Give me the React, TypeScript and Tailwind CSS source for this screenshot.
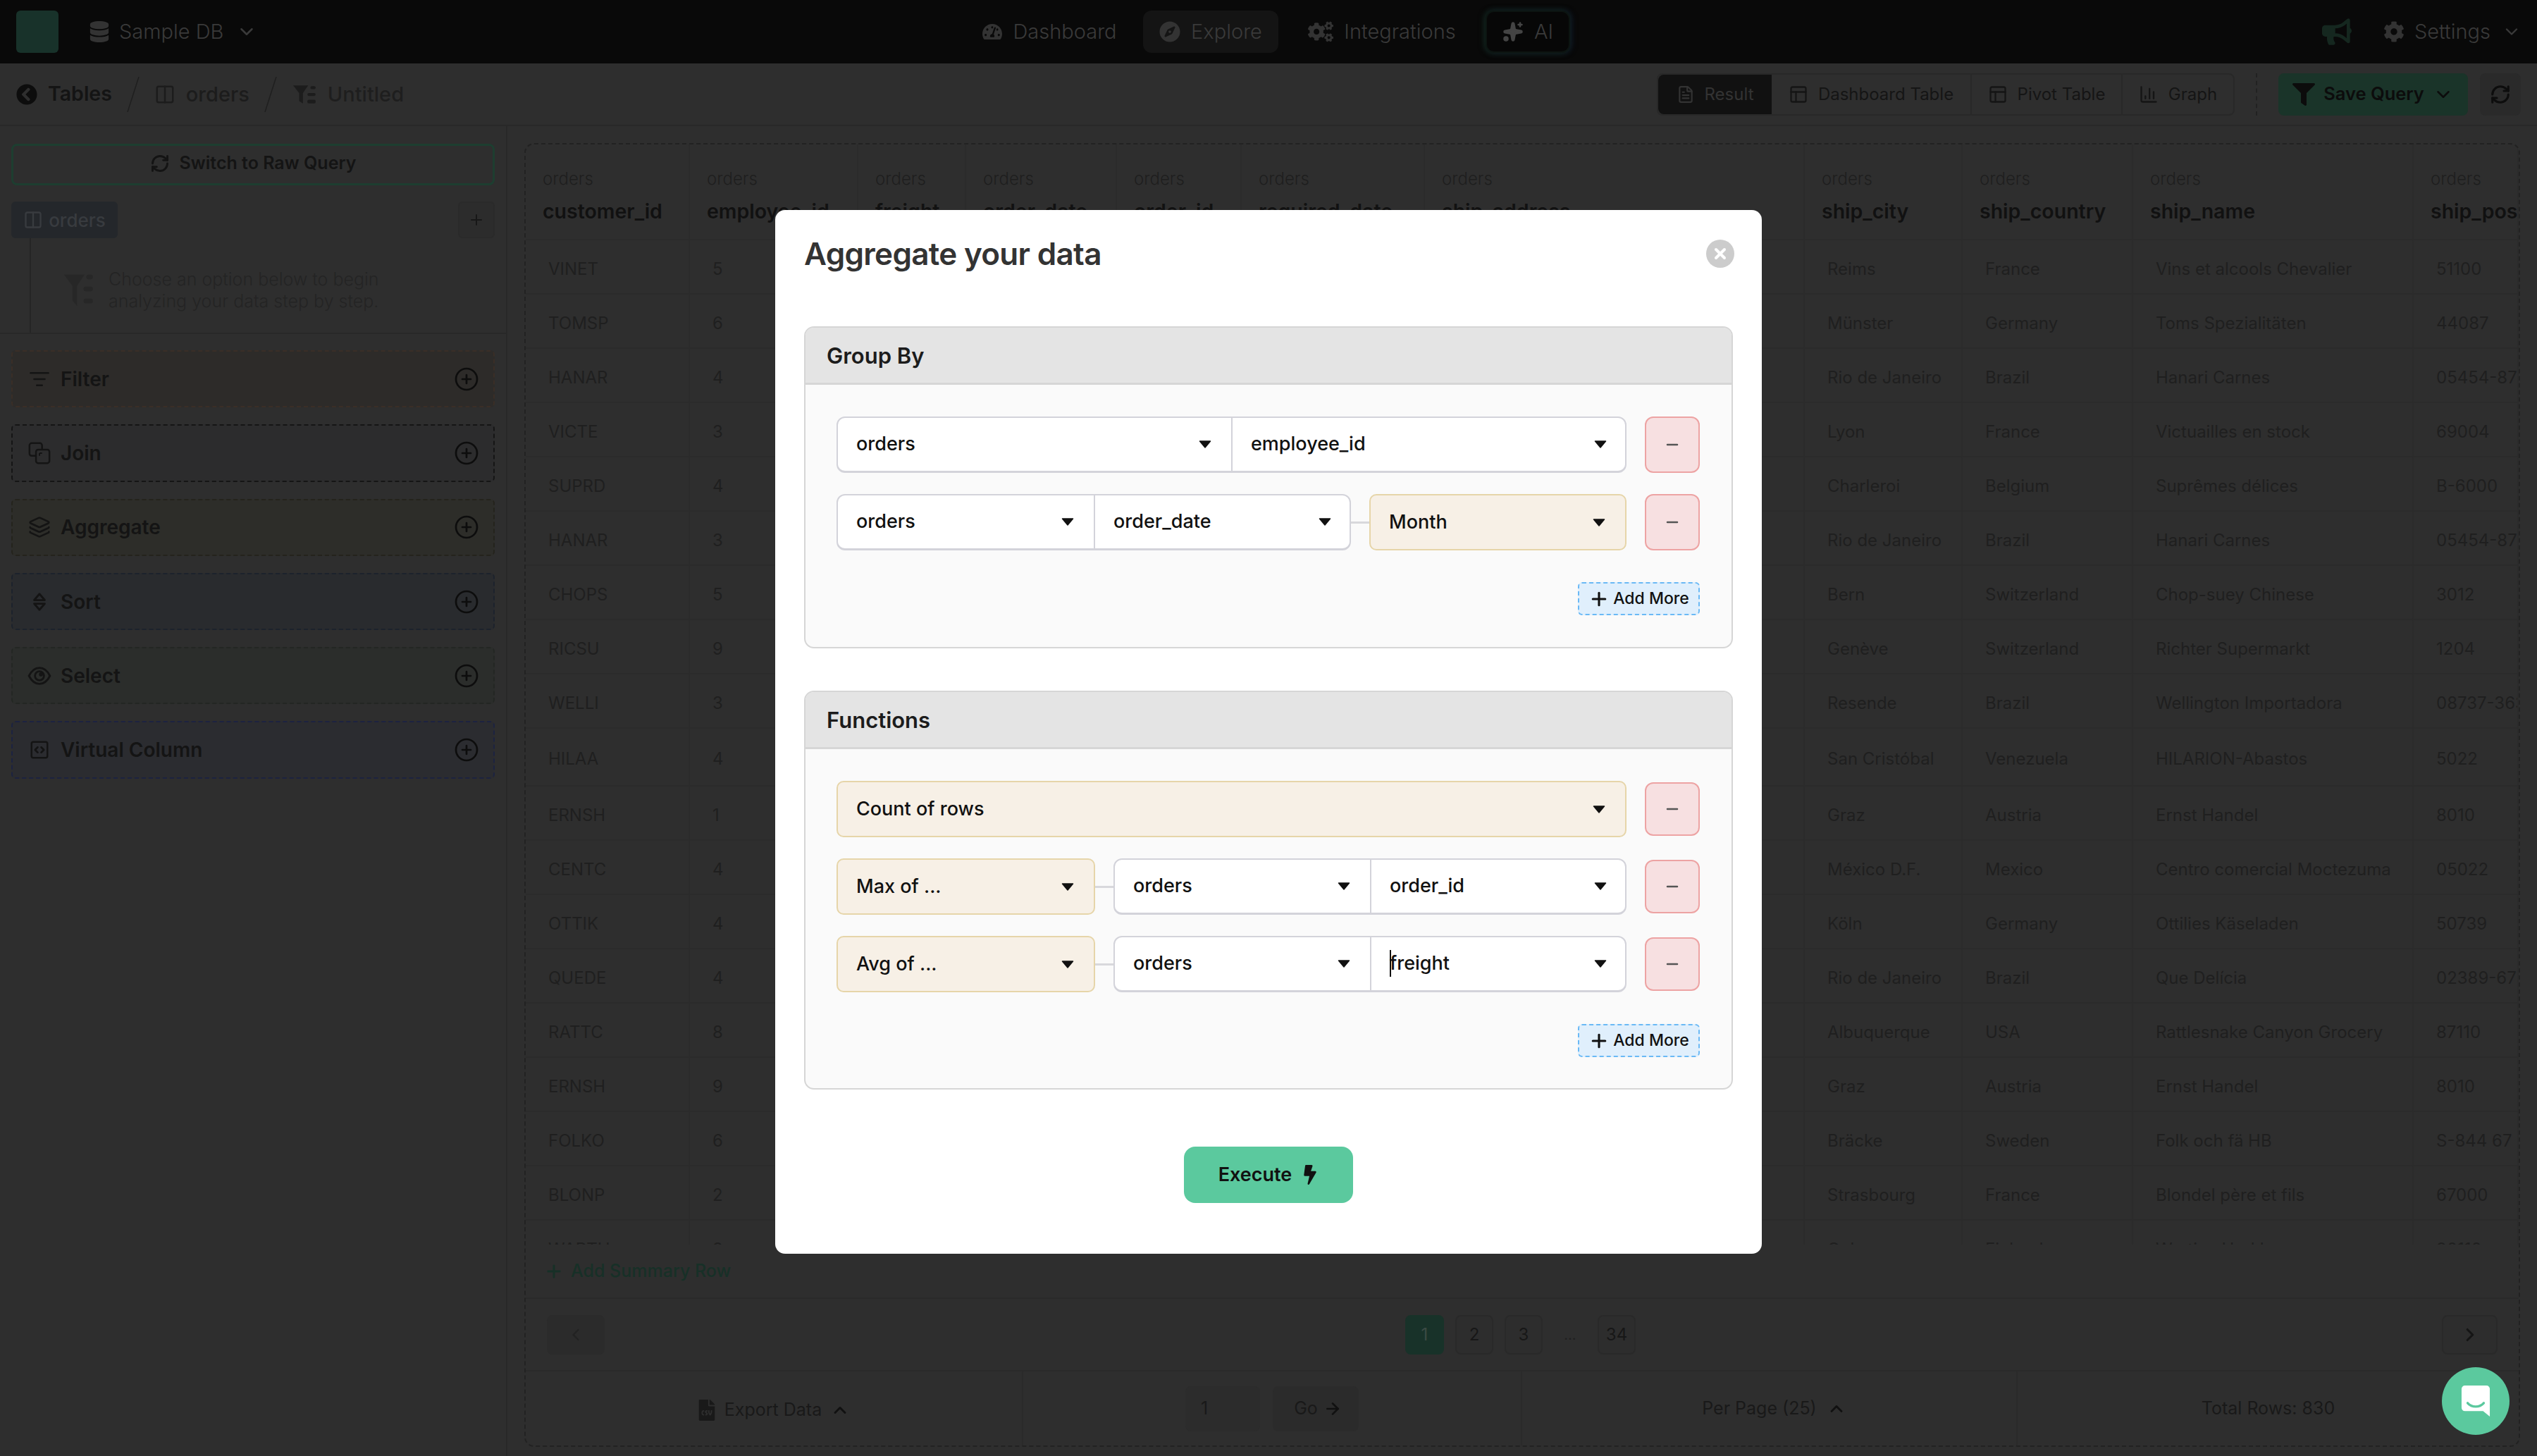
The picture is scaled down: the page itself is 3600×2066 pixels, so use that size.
import React from "react";
import { FaTachometerAlt, FaCompass, FaCogs, FaCog, FaBullhorn, FaFilter, FaChevronCircleLeft, FaDatabase, FaBolt, FaFileCsv } from "react-icons/fa";
import { ChevronDown, ChevronUp, ChevronLeft, ChevronRight, Sparkles, Columns2, RefreshCw, Plus, Minus, CirclePlus, ListFilter, Layers, SquareCode, PanelsTopLeft, ChartColumn, X, FileText, ArrowRight } from "lucide-react";

const rows: string[][] = [
  ["VINET","5","Reims","France","Vins et alcools Chevalier","51100"],
  ["TOMSP","6","Münster","Germany","Toms Spezialitäten","44087"],
  ["HANAR","4","Rio de Janeiro","Brazil","Hanari Carnes","05454-876"],
  ["VICTE","3","Lyon","France","Victuailles en stock","69004"],
  ["SUPRD","4","Charleroi","Belgium","Suprêmes délices","B-6000"],
  ["HANAR","3","Rio de Janeiro","Brazil","Hanari Carnes","05454-876"],
  ["CHOPS","5","Bern","Switzerland","Chop-suey Chinese","3012"],
  ["RICSU","9","Genève","Switzerland","Richter Supermarkt","1204"],
  ["WELLI","3","Resende","Brazil","Wellington Importadora","08737-363"],
  ["HILAA","4","San Cristóbal","Venezuela","HILARION-Abastos","5022"],
  ["ERNSH","1","Graz","Austria","Ernst Handel","8010"],
  ["CENTC","4","México D.F.","Mexico","Centro comercial Moctezuma","05022"],
  ["OTTIK","4","Köln","Germany","Ottilies Käseladen","50739"],
  ["QUEDE","4","Rio de Janeiro","Brazil","Que Delícia","02389-673"],
  ["RATTC","8","Albuquerque","USA","Rattlesnake Canyon Grocery","87110"],
  ["ERNSH","9","Graz","Austria","Ernst Handel","8010"],
  ["FOLKO","6","Bräcke","Sweden","Folk och fä HB","S-844 67"],
  ["BLONP","2","Strasbourg","France","Blondel père et fils","67000"],
  ["WARTH","3","Oulu","Finland","Wartian Herkku","90110"],
];

const columns: [string, string][] = [
  ["customer_id","w-[233px]"],["employee_id","w-[239px]"],["freight","w-[153px]"],["order_date","w-[214px]"],
  ["order_id","w-[177px]"],["required_date","w-[260px]"],["ship_address","w-[539px]"],["ship_city","w-[224px]"],
  ["ship_country","w-[242px]"],["ship_name","w-[398px]"],["ship_postal_code","w-[149px]"],
];

const Caret = () => (
  <svg viewBox="0 0 18 11" className="w-[18px] h-[11px] shrink-0 ml-auto"><path d="M1.5 1 H16.5 L9 10 Z" fill="#111" stroke="#111" strokeWidth="1.5" strokeLinejoin="round" /></svg>
);

function Sel({ label, w, tint }: { label: string; w: string; tint?: boolean }) {
  return (
    <div className={`${w} h-full flex items-center pl-[26px] pr-[28px] text-[27px] font-medium text-[#111] ${tint ? "bg-[#f7f0e6] border-2 border-[#e6d5a9] rounded-[10px]" : ""}`}>
      <span className="whitespace-nowrap">{label}</span>
      <Caret />
    </div>
  );
}

const Connector = () => <div className="w-[26px] h-[3px] bg-[#d8d8dc] shrink-0" />;

function Combo({ w, a, b, split, caretMark }: { w: string; a: string; b: string; split: string; caretMark?: boolean }) {
  return (
    <div className={`${w} h-full flex bg-white border-2 border-b-[3px] border-[#d3d3da] rounded-[12px]`}>
      <Sel label={a} w={split} />
      <div className="flex-1 h-full border-l-2 border-[#d3d3da] flex items-center pl-[26px] pr-[26px] text-[27px] font-medium text-[#111] relative">
        {caretMark && <span className="absolute left-[26px] top-[18px] w-[2px] h-[38px] bg-[#111]" />}
        <span className="whitespace-nowrap">{b}</span>
        <Caret />
      </div>
    </div>
  );
}

const MinusBtn = () => (
  <button className="w-[78px] h-full shrink-0 rounded-[12px] bg-[#f7e0e1] border-2 border-[#eda3a3] flex items-center justify-center">
    <Minus className="w-[24px] h-[24px] text-[#555]" strokeWidth={2.5} />
  </button>
);

const AddMore = () => (
  <div className="flex justify-end">
    <button className="w-[173px] h-[47px] rounded-[6px] bg-[#e0effc] border-2 border-dashed border-[#6ab9f5] flex items-center justify-center gap-[5px] text-[23px] font-medium text-[#111]">
      <Plus className="w-[30px] h-[30px]" strokeWidth={2.5} />
      Add More
    </button>
  </div>
);

function Box({ title, children, h }: { title: string; children: React.ReactNode; h: string }) {
  return (
    <section className={`${h} rounded-[14px] border-2 border-[#d6d6d6] bg-[#fafafa] overflow-hidden flex flex-col`}>
      <div className="h-[81px] shrink-0 bg-[#e4e4e4] border-b-[3px] border-[#d6d6d6] flex items-center pl-[30px] pt-[2px] text-[31px] font-semibold text-[#1c1c1c]">{title}</div>
      <div className="flex-1 pl-[44px] pr-[45px] pt-[45px] flex flex-col">{children}</div>
    </section>
  );
}

const SortIcon = () => (
  <svg viewBox="0 0 24 24" className="w-[30px] h-[30px]" fill="none" stroke="#141414" strokeWidth="2.2" strokeLinejoin="round">
    <path d="M12 3 L18 10 H6 Z" /><path d="M12 21 L18 14 H6 Z" />
  </svg>
);
const EyeIcon = () => (
  <svg viewBox="0 0 24 24" className="w-[34px] h-[34px]" fill="none" stroke="#141414" strokeWidth="2">
    <path d="M1.5 12 C5 5 9 4 12 4 C15 4 19 5 22.5 12 C19 19 15 20 12 20 C9 20 5 19 1.5 12 Z" /><circle cx="12" cy="12" r="4.5" /><circle cx="13.5" cy="10.5" r="1" fill="#141414" />
  </svg>
);
const JoinIcon = () => (
  <svg viewBox="0 0 26 26" className="w-[32px] h-[32px]" fill="none" stroke="#141414" strokeWidth="2" strokeLinejoin="round">
    <path d="M16 9 V4 A2.5 2.5 0 0 0 13.5 1.5 H4 A2.5 2.5 0 0 0 1.5 4 V13.5 A2.5 2.5 0 0 0 4 16 H9" />
    <rect x="9" y="9" width="15.5" height="15.5" rx="2.5" />
    <path d="M13 13 H16 M13 13 V16" strokeWidth="1.6" />
  </svg>
);

const cards = [
  { t: "Filter", bg: "bg-[#2d2b29]", b: "border-[#3a2e26]", icon: <ListFilter className="w-[30px] h-[30px]" strokeWidth={2} /> },
  { t: "Join", bg: "bg-[#2c2c2d]", b: "border-[#151515]", icon: <JoinIcon /> },
  { t: "Aggregate", bg: "bg-[#2d2d29]", b: "border-[#24231c]", icon: <Layers className="w-[32px] h-[32px]" strokeWidth={2} /> },
  { t: "Sort", bg: "bg-[#292b2e]", b: "border-[#1c222c]", icon: <SortIcon /> },
  { t: "Select", bg: "bg-[#2b2d2b]", b: "border-[#232623]", icon: <EyeIcon /> },
  { t: "Virtual Column", bg: "bg-[#2b2c30]", b: "border-[#1c2240]", icon: <SquareCode className="w-[30px] h-[30px]" strokeWidth={2} /> },
];

function NavItem({ icon, label, cls }: { icon: React.ReactNode; label: string; cls: string }) {
  return (
    <div className={`h-[60px] flex items-center justify-center gap-[15px] rounded-[12px] text-[29px] font-light text-[#3a3a3a] ${cls}`}>
      {icon}{label}
    </div>
  );
}

const BreadSlash = () => <div className="w-[20px] h-[50px] mx-[20px]"><svg viewBox="0 0 20 50" className="w-full h-full"><path d="M18 0 L2 50" stroke="#1f1f1f" strokeWidth="1.5" /></svg></div>;

const UntitledIcon = () => (
  <svg viewBox="0 0 32 26" className="w-[34px] h-[28px] ml-[2px]"><path d="M0 1 H20 L13 11 V25 L8 22 V11 Z" fill="#1c1c1c" /><rect x="23" y="2" width="7" height="4" rx="2" fill="#1c1c1c" /><rect x="19" y="11" width="11" height="4" rx="2" fill="#1c1c1c" /><rect x="19" y="20" width="11" height="5" rx="2" fill="#1c1c1c" /></svg>
);

function PageBtn({ n, on, w }: { n: string; on?: boolean; w: string }) {
  return <div className={`${w} h-[56px] rounded-[8px] flex items-center justify-center text-[24px] ${on ? "bg-[#183229] text-[#3b4a44]" : "bg-[#2d2d2d] border-2 border-[#292929] text-[#171717]"}`}>{n}</div>;
}

function ToolTab({ icon, label, w, first }: { icon: React.ReactNode; label: string; w: string; first?: boolean }) {
  return (
    <div className={`${w} h-full flex items-center justify-center gap-[14px] text-[24px] ${first ? "bg-[#111111] text-[#333333] rounded-l-[8px]" : "text-[#151515] border-r-2 border-[#282828]"}`}>
      {icon}{label}
    </div>
  );
}

export default function App() {
  return (
    <div className="relative w-[3600px] h-[2066px] overflow-hidden bg-[#2e2e2e] font-['Inter',sans-serif] flex flex-col">
      {/* top bar */}
      <header className="h-[90px] shrink-0 bg-[#090909] flex items-center">
        <div className="w-[760px] flex items-center pl-[23px]">
          <div className="w-[60px] h-[60px] rounded-[6px] bg-[#18322a]" />
          <div className="flex items-center ml-[44px] gap-[14px] text-[29px] font-light text-[#3a3a3a]">
            <FaDatabase className="w-[28px] h-[30px] text-[#333]" />
            Sample DB
            <ChevronDown className="w-[30px] h-[30px] ml-[4px]" />
          </div>
        </div>
        <nav className="flex items-center gap-[16px] ml-[613px]">
          <NavItem label="Dashboard" cls="w-[233px]" icon={<FaTachometerAlt className="w-[28px] h-[28px] text-[#333]" />} />
          <NavItem label="Explore" cls="w-[192px] bg-[#141414]" icon={<FaCompass className="w-[30px] h-[30px] text-[#333]" />} />
          <NavItem label="Integrations" cls="w-[262px]" icon={<FaCogs className="w-[36px] h-[36px] text-[#333]" />} />
          <NavItem label="AI" cls="w-[120px] bg-[#070707] border-2 border-[#0c1411] shadow-[-2px_0_8px_#12261c,2px_0_8px_#101a2c]" icon={<Sparkles className="w-[30px] h-[30px] text-[#444] fill-[#444]" />} />
        </nav>
        <div className="ml-auto flex items-center pr-[22px]">
          <FaBullhorn className="w-[42px] h-[38px] text-[#15271f] mr-[45px]" />
          <FaCog className="w-[30px] h-[30px] text-[#333] mr-[14px]" />
          <span className="text-[29px] font-light text-[#3a3a3a]">Settings</span>
          <ChevronDown className="w-[28px] h-[28px] ml-[16px] text-[#3a3a3a]" />
        </div>
      </header>

      {/* breadcrumb / toolbar */}
      <div className="h-[89px] shrink-0 border-b-2 border-[#282828] flex items-center pl-[23px] pr-[23px]">
        <FaChevronCircleLeft className="w-[30px] h-[30px] text-[#0d0d0d]" />
        <span className="ml-[15px] text-[28.5px] font-semibold text-[#141414]">Tables</span>
        <BreadSlash />
        <Columns2 className="w-[30px] h-[30px] text-[#1c1c1c]" strokeWidth={2} />
        <span className="ml-[15px] text-[29px] font-medium text-[#1c1c1c]">orders</span>
        <BreadSlash />
        <UntitledIcon />
        <span className="ml-[15px] text-[29px] font-medium text-[#1e1e1e]">Untitled</span>
        <div className="ml-auto flex items-center h-[60px]">
          <div className="flex h-full w-[820px] border-2 border-[#282828] rounded-[8px]">
            <ToolTab first w="w-[161px]" label="Result" icon={<FileText className="w-[26px] h-[30px]" />} />
            <ToolTab w="w-[284px]" label="Dashboard Table" icon={<PanelsTopLeft className="w-[28px] h-[30px]" />} />
            <ToolTab w="w-[214px]" label="Pivot Table" icon={<PanelsTopLeft className="w-[28px] h-[30px]" />} />
            <div className="flex-1 h-full flex items-center justify-center gap-[14px] text-[24px] text-[#151515]"><ChartColumn className="w-[28px] h-[30px]" />Graph</div>
          </div>
          <div className="h-full border-l-2 border-dashed border-[#222222] ml-[30px] mr-[30px]" />
          <div className="w-[269px] h-full rounded-[8px] bg-[#1a3429] flex items-center justify-center gap-[12px] text-[25.5px] font-semibold text-[#0c0c0c]">
            <FaFilter className="w-[32px] h-[32px]" />Save Query<ChevronDown className="w-[30px] h-[30px]" />
          </div>
          <div className="w-[58px] h-full ml-[17px] rounded-[8px] bg-[#2a2a2a] flex items-center justify-center">
            <RefreshCw className="w-[30px] h-[30px] text-[#0d0d0d]" strokeWidth={2.5} />
          </div>
        </div>
      </div>

      <div className="flex-1 flex min-h-0">
        {/* sidebar */}
        <aside className="w-[720px] shrink-0 border-r-2 border-[#282828] flex flex-col">
          <div className="h-[295px] shrink-0 border-b-2 border-[#282828] px-[16px] pt-[25px] flex flex-col">
            <button className="w-[686px] h-[59px] pb-[3px] rounded-[8px] border-[3px] border-[#1d3e30] flex items-center justify-center gap-[14px] text-[25px] font-semibold text-[#141414]">
              <RefreshCw className="w-[28px] h-[28px]" strokeWidth={2.5} />Switch to Raw Query
            </button>
            <div className="mt-[23px] h-[52px] flex items-center justify-between">
              <div className="w-[151px] h-full rounded-[6px] bg-[#24272b] flex items-center justify-center gap-[8px] text-[26px] font-medium text-[#383b3f]">
                <Columns2 className="w-[28px] h-[28px]" />orders
              </div>
              <div className="w-[52px] h-full rounded-[6px] bg-[#2c2c2c] border-2 border-[#2a2a2a] flex items-center justify-center">
                <Plus className="w-[24px] h-[24px] text-[#171717]" strokeWidth={2} />
              </div>
            </div>
            <div className="flex-1 ml-[26px] border-l-2 border-[#252525] pl-[46px] pt-[14px] flex items-center gap-[20px]">
              <svg viewBox="0 0 32 38" className="w-[44px] h-[50px] shrink-0"><path d="M0 2 H22 L14 14 V36 L9 30 V14 Z" fill="#272727" /><rect x="24" y="2" width="7" height="5" rx="2.5" fill="#272727" /><rect x="21" y="15" width="10" height="5" rx="2.5" fill="#272727" /><rect x="21" y="28" width="10" height="5" rx="2.5" fill="#272727" /></svg>
              <p className="text-[25px] leading-[31px] font-light text-[#242424] whitespace-nowrap">Choose an option below to begin<br />analyzing your data step by step.</p>
            </div>
          </div>
          <div className="px-[16px] pt-[23px] flex flex-col gap-[24px]">
            {cards.map((c) => (
              <div key={c.t} className={`w-[686px] h-[81.3px] rounded-[6px] border-2 border-dashed ${c.b} ${c.bg} flex items-center pl-[18px] pr-[20px] text-[28px] font-semibold text-[#141414]`}>
                <div className="w-[40px] flex justify-center text-[#141414] mr-[10px]">{c.icon}</div>
                {c.t}
                <CirclePlus className="ml-auto w-[36px] h-[36px] text-[#0d0d0d]" strokeWidth={1.8} />
              </div>
            ))}
          </div>
        </aside>

        {/* table panel */}
        <main className="flex-1 pl-[24px] pr-[24px] pt-[24px] pb-[13px] min-w-0">
          <div className="h-full rounded-[14px] border-2 border-dashed border-[#222222] flex flex-col overflow-hidden">
            <div className="h-[1561px] shrink-0 overflow-hidden">
              <div className="flex h-[136px] border-b-2 border-[#2b2b2b]">
                {columns.map(([name, w]) => (
                  <div key={name} className={`${w} shrink-0 pl-[24px] pt-[35px] border-r-2 border-[#2b2b2b] overflow-hidden`}>
                    <div className="text-[24px] leading-[28px] font-light text-[#1e1e1e]">orders</div>
                    <div className="mt-[14px] text-[28.5px] leading-[36px] font-semibold text-[#111111] whitespace-nowrap">{name}</div>
                  </div>
                ))}
              </div>
              {rows.map((r, i) => (
                <div key={i} className={`flex border-b-2 border-[#2b2b2b] ${i === 9 ? "h-[82px]" : "h-[77px]"}`}>
                  {columns.map(([name, w], c) => {
                    const map: Record<number, number> = { 0: 0, 1: 1, 7: 2, 8: 3, 9: 4, 10: 5 };
                    const v = map[c] !== undefined ? r[map[c]] : "";
                    return (
                      <div key={name} className={`${w} shrink-0 pl-[32px] pt-[6px] border-r-2 border-[#2b2b2b] flex items-center text-[24px] font-normal text-[#1f1f1f] whitespace-nowrap overflow-hidden`}>{v}</div>
                    );
                  })}
                </div>
              ))}
            </div>
            <div className="h-[77px] shrink-0 border-b-2 border-[#2a2a2a] flex items-center pl-[26px] gap-[10px] text-[25px] font-medium text-[#173027]">
              <Plus className="w-[28px] h-[28px]" strokeWidth={2.5} />Add Summary Row
            </div>
            <div className="h-[103px] shrink-0 border-b-2 border-[#2a2a2a] flex items-center px-[30px]">
              <div className="w-[82px] h-[56px] rounded-[8px] bg-[#2b2b2b] flex items-center justify-center"><ChevronLeft className="w-[28px] h-[28px] text-[#222]" /></div>
              <div className="ml-[1136px] flex items-center gap-[16px]">
                <PageBtn n="1" on w="w-[55px]" />
                <PageBtn n="2" w="w-[54px]" />
                <PageBtn n="3" w="w-[54px]" />
                <span className="w-[46px] text-center text-[20px] text-[#1f1f1f]">...</span>
                <PageBtn n="34" w="w-[54px]" />
              </div>
              <div className="ml-auto w-[79px] h-[56px] rounded-[8px] bg-[#2d2d2d] border-2 border-[#292929] flex items-center justify-center"><ChevronRight className="w-[30px] h-[30px] text-[#151515]" strokeWidth={2.5} /></div>
            </div>
            <div className="flex-1 flex text-[25px] text-[#191919]">
              <div className="w-[706px] flex items-center justify-center gap-[12px] border-r-2 border-[#2a2a2a] pt-[4px]">
                <FaFileCsv className="w-[26px] h-[30px]" />Export Data<ChevronUp className="w-[28px] h-[28px] text-[#111]" strokeWidth={2.5} />
              </div>
              <div className="w-[708px] flex items-center justify-center gap-[18px] border-r-2 border-[#2a2a2a]">
                <div className="w-[106px] h-[64px] bg-[#2c2c2c] rounded-[8px] flex items-center pl-[22px]">1</div>
                <div className="w-[122px] h-[64px] bg-[#2b2b2b] rounded-[8px] flex items-center justify-center gap-[8px] pl-[6px]">Go<ArrowRight className="w-[26px] h-[26px] text-[#111]" strokeWidth={2.5} /></div>
              </div>
              <div className="w-[703px] flex items-center justify-center gap-[14px] border-r-2 border-[#2a2a2a] pl-[14px]">
                Per Page (25)<ChevronUp className="w-[28px] h-[28px] text-[#111]" strokeWidth={2.5} />
              </div>
              <div className="flex-1 flex items-center justify-center">Total Rows: 830</div>
            </div>
          </div>
        </main>
      </div>

      {/* modal */}
      <div className="absolute left-[1100px] top-[298px] w-[1400px] h-[1481px] bg-white rounded-[14px] px-[41px] flex flex-col">
        <div className="h-[165px] shrink-0 flex pt-[38px] justify-between">
          <h2 className="text-[44px] leading-[48px] tracking-[-0.7px] font-semibold text-[#333333]">Aggregate your data</h2>
          <button className="w-[40px] h-[40px] mt-[4px] -mr-[2px] rounded-full bg-[#cccccc] flex items-center justify-center">
            <X className="w-[24px] h-[24px] text-white" strokeWidth={4} />
          </button>
        </div>
        <Box title="Group By" h="h-[457px]">
          <div className="h-[80px] flex gap-[26px]">
            <Combo w="w-[1121px]" split="w-[558px]" a="orders" b="employee_id" />
            <MinusBtn />
          </div>
          <div className="h-[80px] mt-[30px] flex gap-[26px] items-center">
            <div className="flex-1 h-full flex items-center">
              <Combo w="w-[730px]" split="w-[363px]" a="orders" b="order_date" />
              <Connector />
              <Sel tint label="Month" w="w-[365px]" />
            </div>
            <MinusBtn />
          </div>
          <div className="mt-[45px]"><AddMore /></div>
        </Box>
        <div className="mt-[60px]">
          <Box title="Functions" h="h-[566px]">
            <div className="h-[80px] flex gap-[26px] items-center">
              <Sel tint label="Count of rows" w="w-[1121px]" />
              <div className="h-[76px]"><MinusBtn /></div>
            </div>
            <div className="h-[80px] mt-[30px] flex gap-[26px] items-center">
              <div className="flex-1 h-full flex items-center">
                <Sel tint label="Max of ..." w="w-[367px]" />
                <Connector />
                <Combo w="w-[728px]" split="w-[362px]" a="orders" b="order_id" />
              </div>
              <div className="h-[76px]"><MinusBtn /></div>
            </div>
            <div className="h-[80px] mt-[30px] flex gap-[26px] items-center">
              <div className="flex-1 h-full flex items-center">
                <Sel tint label="Avg of ..." w="w-[367px]" />
                <Connector />
                <Combo w="w-[728px]" split="w-[362px]" a="orders" b="freight" caretMark />
              </div>
              <div className="h-[76px]"><MinusBtn /></div>
            </div>
            <div className="mt-[45px]"><AddMore /></div>
          </Box>
        </div>
        <div className="mt-[81px] flex justify-center">
          <button className="w-[240px] h-[80px] rounded-[16px] bg-[#5bc99e] flex items-center justify-center gap-[14px] text-[27px] font-semibold text-[#111]">
            Execute<FaBolt className="w-[24px] h-[28px]" />
          </button>
        </div>
      </div>

      {/* chat bubble */}
      <div className="absolute left-[3465px] top-[1940px] w-[96px] h-[96px] rounded-full bg-[#5bc99e] flex items-center justify-center">
        <svg viewBox="0 0 44 48" className="w-[42px] h-[46px]">
          <path d="M6 1 H38 A5 5 0 0 1 43 6 V47 L33 39 H6 A5 5 0 0 1 1 34 V6 A5 5 0 0 1 6 1 Z" fill="#fff" />
          <path d="M10 27 C16 34 28 34 34 27" fill="none" stroke="#5bc99e" strokeWidth="3.5" strokeLinecap="round" />
        </svg>
      </div>
    </div>
  );
}
